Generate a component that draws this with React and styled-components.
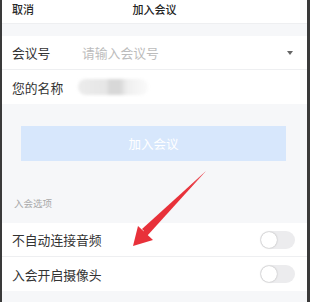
import React from 'react'
import styled, { createGlobalStyle } from 'styled-components';

const Global = createGlobalStyle`
  html, body { margin: 0; padding: 0; }
  body {
    font-family: "Noto Sans CJK SC", "Noto Sans", sans-serif;
    background: #f6f7f9;
  }
`;

const Frame = styled.div`
  position: relative;
  width: 310px;
  height: 302px;
  box-sizing: border-box;
  border-left: 2px solid #3a3a3a;
  border-right: 3px solid #3a3a3a;
  background: #f6f7f9;
  overflow: hidden;
`;

const Header = styled.div`
  height: 24px;
  background: #fff;
  border-bottom: 1px solid #eeeff1;
  display: grid;
  grid-template-columns: 1fr auto 1fr;
  align-items: center;
  padding: 0 10px;
  font-size: 11px;
  font-weight: 500;
  color: #2a2a2a;
  line-height: 1;
  padding-bottom: 4px;
  box-sizing: border-box;
`;

const Title = styled.span`
  color: #222;
  margin-left: 0;
`;

const Group = styled.div`
  background: #fff;
  margin-top: ${p => p.$top}px;
`;

const Row = styled.div`
  height: ${p => p.$h || 34}px;
  display: flex;
  align-items: center;
  padding: 0 10px;
  box-sizing: border-box;
  border-bottom: ${p => p.$last ? 'none' : '1px solid #eeeff1'};
  font-size: 12.8px;
  color: #333;
`;

const Label = styled.span`
  width: 70px;
  flex: none;
`;

const Placeholder = styled.span`
  flex: 1;
  color: #bcbcbc;
`;

const Caret = styled.span`
  width: 0;
  height: 0;
  border-left: 3px solid transparent;
  border-right: 3px solid transparent;
  border-top: 4px solid #666;
  margin-right: 4px;
`;

const Blur = styled.div`
  width: 70px;
  height: 16px;
  margin-left: -4px;
  border-radius: 8px;
  background: linear-gradient(90deg, #ececec 0%, #e6e6e6 40%, #d8d8d8 45%, #d8d8d8 60%, #efefef 70%, #fafafa 100%);
  filter: blur(1.5px);
`;

const ButtonArea = styled.div`
  padding: 22px 21px 0 19px;
`;

const JoinButton = styled.div`
  height: 35px;
  background: #d7e7fc;
  color: #fff;
  font-size: 12.5px;
  display: flex;
  align-items: center;
  justify-content: center;
`;

const Section = styled.div`
  padding: 35px 0 0 12px;
  height: 27px;
  box-sizing: content-box;
  font-size: 9.5px;
  color: #a9a9a9;
`;

const Spacer = styled.span`
  flex: 1;
`;

const Toggle = styled.div`
  width: 35px;
  height: 18px;
  border-radius: 9px;
  background: #ececee;
  position: relative;
  margin-right: 2px;
  &::after {
    content: "";
    position: absolute;
    left: 1px;
    top: 1px;
    width: 16px;
    height: 16px;
    border-radius: 50%;
    background: #fff;
    box-shadow: 0 0 1.5px rgba(0,0,0,0.35);
  }
`;

const Arrow = styled.svg`
  position: absolute;
  left: 0;
  top: 0;
  pointer-events: none;
`;

export default function App() {
  return (
    <Frame>
      <Global />
      <Header>
        <span>取消</span>
        <Title>加入会议</Title>
        <span />
      </Header>
      <Group $top={12}>
        <Row>
          <Label>会议号</Label>
          <Placeholder>请输入会议号</Placeholder>
          <Caret />
        </Row>
        <Row $last>
          <Label>您的名称</Label>
          <Blur />
        </Row>
      </Group>
      <ButtonArea>
        <JoinButton>加入会议</JoinButton>
      </ButtonArea>
      <Section>入会选项</Section>
      <Group $top={0}>
        <Row>
          <span>不自动连接音频</span>
          <Spacer />
          <Toggle />
        </Row>
        <Row $last>
          <span>入会开启摄像头</span>
          <Spacer />
          <Toggle />
        </Row>
      </Group>
      <Arrow width="310" height="302" viewBox="0 0 310 302">
        <path d="M204 171 L143 232 L140 229 Z" fill="#e8313a" />
        <path d="M204 171 L145 236 L141 232 Z" fill="#e8313a" />
        <path d="M131 246 L136 226 L151 240 Z" fill="#e8313a" />
      </Arrow>
    </Frame>
  )
}
